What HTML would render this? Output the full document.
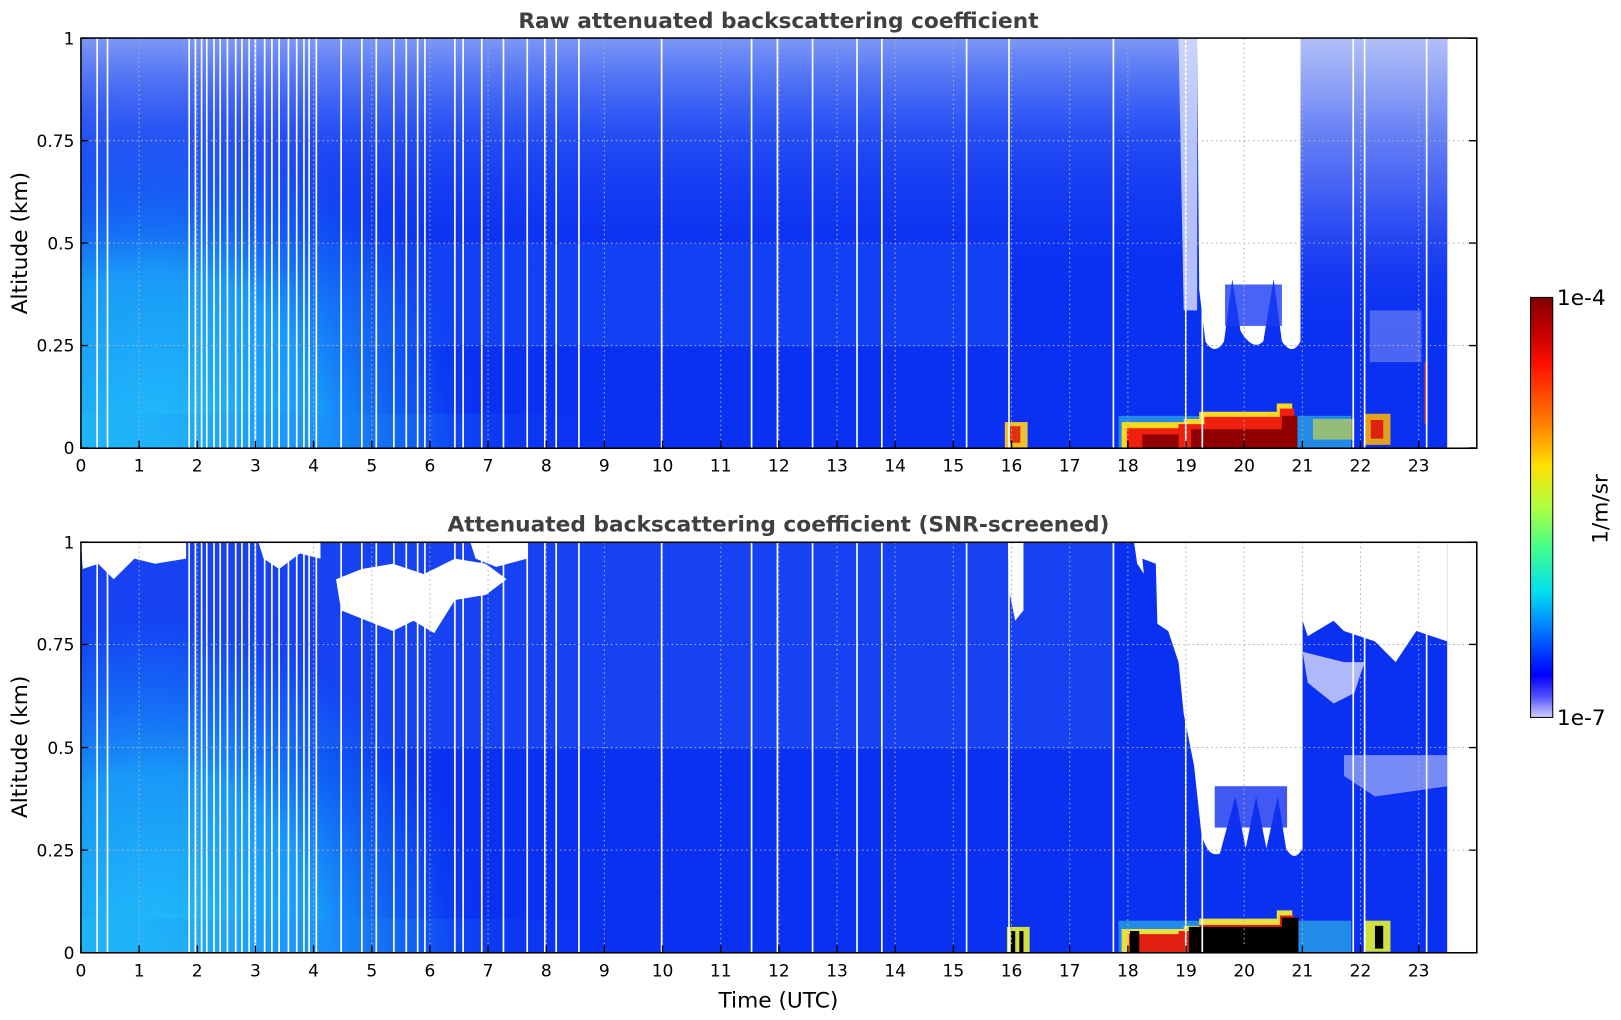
<!DOCTYPE html>
<html><head><meta charset="utf-8"><style>
html,body{margin:0;padding:0;background:#fff;overflow:hidden;}
svg{display:block;font-family:"DejaVu Sans","Liberation Sans",sans-serif;}
</style></head><body>
<svg width="1621" height="1020" viewBox="0 0 1568 986" preserveAspectRatio="none" xmlns="http://www.w3.org/2000/svg">
<defs>
<clipPath id="cp1"><rect x="78.3" y="36.8" width="1321.7" height="396.5"/></clipPath>
<clipPath id="cp2"><rect x="78.3" y="524.2" width="1321.7" height="396.8"/></clipPath>
<radialGradient id="cy1" gradientUnits="userSpaceOnUse" cx="150" cy="440" r="330" gradientTransform="translate(150 440) scale(1 1.1) translate(-150 -440)">
<stop offset="0" stop-color="#22c0fb" stop-opacity="1"/>
<stop offset="0.5" stop-color="#1aa4f8" stop-opacity="0.9"/>
<stop offset="0.8" stop-color="#1070f6" stop-opacity="0.45"/>
<stop offset="1" stop-color="#0a30f2" stop-opacity="0"/>
</radialGradient>
<radialGradient id="cy2" gradientUnits="userSpaceOnUse" cx="150" cy="928" r="330" gradientTransform="translate(150 928) scale(1 1.1) translate(-150 -928)">
<stop offset="0" stop-color="#22c0fb" stop-opacity="1"/>
<stop offset="0.5" stop-color="#1aa4f8" stop-opacity="0.9"/>
<stop offset="0.8" stop-color="#1070f6" stop-opacity="0.45"/>
<stop offset="1" stop-color="#0a30f2" stop-opacity="0"/>
</radialGradient>
<linearGradient id="noise" x1="0" y1="0" x2="0" y2="1">
<stop offset="0" stop-color="#8aa4f7" stop-opacity="0.9"/>
<stop offset="0.4" stop-color="#3e6af4" stop-opacity="0.5"/>
<stop offset="1" stop-color="#0a30f2" stop-opacity="0"/>
</linearGradient>
<linearGradient id="noiseR" x1="0" y1="0" x2="0" y2="1">
<stop offset="0" stop-color="#b8c4f8" stop-opacity="0.9"/>
<stop offset="0.5" stop-color="#6078f4" stop-opacity="0.6"/>
<stop offset="1" stop-color="#0a30f2" stop-opacity="0"/>
</linearGradient>
<linearGradient id="botstrip" x1="0" y1="0" x2="1" y2="0">
<stop offset="0" stop-color="#20b8fa" stop-opacity="0.6"/>
<stop offset="0.5" stop-color="#1a80f8" stop-opacity="0.4"/>
<stop offset="1" stop-color="#0a30f2" stop-opacity="0"/>
</linearGradient>
<linearGradient id="cb" x1="0" y1="0" x2="0" y2="1">
<stop offset="0" stop-color="#800000"/>
<stop offset="0.08" stop-color="#c00000"/>
<stop offset="0.16" stop-color="#ff1000"/>
<stop offset="0.3" stop-color="#ff8000"/>
<stop offset="0.4" stop-color="#ffe000"/>
<stop offset="0.5" stop-color="#b0ff40"/>
<stop offset="0.6" stop-color="#40ff90"/>
<stop offset="0.7" stop-color="#00e0f0"/>
<stop offset="0.8" stop-color="#0070ff"/>
<stop offset="0.9" stop-color="#0000ff"/>
<stop offset="0.95" stop-color="#5050ff"/>
<stop offset="1" stop-color="#d0d0ff"/>
</linearGradient>
<g id="vlines" stroke="#fff" stroke-width="1.6">
<line x1="94" x2="94" y1="0" y2="397"/><line x1="104" x2="104" y1="0" y2="397"/>
<line x1="183" x2="183" y1="0" y2="397"/><line x1="189" x2="189" y1="0" y2="397"/>
<line x1="195" x2="195" y1="0" y2="397"/><line x1="200" x2="200" y1="0" y2="397"/>
<line x1="207" x2="207" y1="0" y2="397"/><line x1="213" x2="213" y1="0" y2="397"/>
<line x1="220" x2="220" y1="0" y2="397"/><line x1="228" x2="228" y1="0" y2="397"/>
<line x1="234" x2="234" y1="0" y2="397"/><line x1="241" x2="241" y1="0" y2="397"/>
<line x1="247" x2="247" y1="0" y2="397"/><line x1="256" x2="256" y1="0" y2="397"/>
<line x1="263" x2="263" y1="0" y2="397"/><line x1="270" x2="270" y1="0" y2="397"/>
<line x1="279" x2="279" y1="0" y2="397"/><line x1="287" x2="287" y1="0" y2="397"/>
<line x1="294" x2="294" y1="0" y2="397"/><line x1="299" x2="299" y1="0" y2="397"/>
<line x1="306" x2="306" y1="0" y2="397"/><line x1="330" x2="330" y1="0" y2="397"/>
<line x1="350" x2="350" y1="0" y2="397"/><line x1="364" x2="364" y1="0" y2="397"/>
<line x1="381" x2="381" y1="0" y2="397"/><line x1="393" x2="393" y1="0" y2="397"/>
<line x1="404" x2="404" y1="0" y2="397"/><line x1="411" x2="411" y1="0" y2="397"/>
<line x1="440" x2="440" y1="0" y2="397"/><line x1="448" x2="448" y1="0" y2="397"/>
<line x1="466" x2="466" y1="0" y2="397"/><line x1="487" x2="487" y1="0" y2="397"/>
<line x1="510" x2="510" y1="0" y2="397"/><line x1="527" x2="527" y1="0" y2="397"/>
<line x1="538" x2="538" y1="0" y2="397"/><line x1="560" x2="560" y1="0" y2="397"/>
<line x1="640" x2="640" y1="0" y2="397"/><line x1="727" x2="727" y1="0" y2="397"/>
<line x1="752" x2="752" y1="0" y2="397"/><line x1="786" x2="786" y1="0" y2="397"/>
<line x1="829" x2="829" y1="0" y2="397"/><line x1="853" x2="853" y1="0" y2="397"/>
<line x1="935" x2="935" y1="0" y2="397"/><line x1="976" x2="976" y1="0" y2="397"/>
<line x1="1077" x2="1077" y1="0" y2="397"/><line x1="1147" x2="1147" y1="0" y2="397"/>
<line x1="1163" x2="1163" y1="0" y2="397"/><line x1="1309" x2="1309" y1="0" y2="397"/>
<line x1="1320" x2="1320" y1="0" y2="397"/><line x1="1380" x2="1380" y1="0" y2="397"/>
</g>
</defs>

<!-- ============ TOP PLOT ============ -->
<text x="753" y="27" text-anchor="middle" font-size="21" font-weight="bold" fill="#404040">Raw attenuated backscattering coefficient</text>
<g clip-path="url(#cp1)">
<rect x="78.3" y="36.8" width="1321.7" height="396.5" fill="#0a30f2"/>
<rect x="78.3" y="235" width="900" height="100" fill="#1a50f5" opacity="0.5"/>
<rect x="78.3" y="36.8" width="1321.7" height="396.5" fill="url(#cy1)"/>
<rect x="78.3" y="36.8" width="1321.7" height="240" fill="url(#noise)"/>
<rect x="1250" y="36.8" width="150" height="300" fill="url(#noiseR)"/>
<rect x="78.3" y="400" width="560" height="33" fill="url(#botstrip)"/>
<path d="M1158 36.8 H1258 V330 Q1250 345 1240 330 L1232 270 L1222 330 Q1212 340 1200 320 L1192 270 L1184 330 Q1175 345 1166 330 L1160 280 Z" fill="#fff"/>
<path d="M1140 36.8 H1158 V300 H1145 Z" fill="#dfe4fc" opacity="0.8"/>
<rect x="1185" y="275" width="55" height="40" fill="#1a3cf2" opacity="0.8"/>
<path d="M1325 300 h50 v50 h-50z" fill="#b0b8f5" opacity="0.4"/>
<rect x="1082" y="402" width="225" height="31" fill="#30c8e0" opacity="0.6"/>
<path d="M1085 433 V408 H1145 V405 H1160 V398 H1235 V390 H1250 V433 Z" fill="#f8d820"/>
<path d="M1090 433 V414 H1140 V410 H1165 V403 H1238 V395 H1252 V433 Z" fill="#f02010"/>
<path d="M1105 433 V420 H1140 V433 Z M1152 433 V415 H1240 V402 H1255 V433 Z" fill="#900000"/>
<rect x="1320" y="400" width="25" height="30" fill="#e0a020"/>
<rect x="1326" y="406" width="12" height="18" fill="#e02010"/>
<rect x="972" y="408" width="22" height="25" fill="#f0c030"/>
<rect x="977" y="412" width="10" height="16" fill="#e03010"/>
<rect x="1270" y="405" width="40" height="20" fill="#e0e030" opacity="0.6"/>
<rect x="1378" y="350" width="3" height="60" fill="#e03020"/>
<g transform="translate(0,36.8)"><use href="#vlines"/></g>
</g>
<g stroke="#b0b0b0" stroke-width="1" stroke-dasharray="1.5,3">
<path d="M134.6 37V433M190.8 37V433M247.1 37V433M303.3 37V433M359.6 37V433M415.9 37V433M472.1 37V433M528.4 37V433M584.6 37V433M640.9 37V433M697.2 37V433M753.4 37V433M809.7 37V433M865.9 37V433M922.2 37V433M978.5 37V433M1034.7 37V433M1091 37V433M1147.2 37V433M1203.5 37V433M1259.8 37V433M1316 37V433M1372.3 37V433"/>
<path d="M78 136H1428M78 235H1428M78 334H1428"/>
</g>
<rect x="78.3" y="36.8" width="1350.2" height="396.5" fill="none" stroke="#000" stroke-width="1.5"/>
<g stroke="#000" stroke-width="1.3">
<path d="M78 37h7M78 136h7M78 235h7M78 334h7M78 433h7M1428 37h-7M1428 136h-7M1428 235h-7M1428 334h-7M1428 433h-7"/>
<path d="M78.3 433v-7M134.6 433v-7M190.8 433v-7M247.1 433v-7M303.3 433v-7M359.6 433v-7M415.9 433v-7M472.1 433v-7M528.4 433v-7M584.6 433v-7M640.9 433v-7M697.2 433v-7M753.4 433v-7M809.7 433v-7M865.9 433v-7M922.2 433v-7M978.5 433v-7M1034.7 433v-7M1091 433v-7M1147.2 433v-7M1203.5 433v-7M1259.8 433v-7M1316 433v-7M1372.3 433v-7"/>
</g>
<g font-size="16.5" text-anchor="end" fill="#000">
<text x="72" y="43">1</text><text x="72" y="142">0.75</text><text x="72" y="241">0.5</text><text x="72" y="340">0.25</text><text x="72" y="439">0</text>
</g>
<g font-size="16.5" text-anchor="middle" fill="#000">
<text x="78.3" y="456">0</text><text x="134.6" y="456">1</text><text x="190.8" y="456">2</text><text x="247.1" y="456">3</text><text x="303.3" y="456">4</text><text x="359.6" y="456">5</text><text x="415.9" y="456">6</text><text x="472.1" y="456">7</text><text x="528.4" y="456">8</text><text x="584.6" y="456">9</text><text x="640.9" y="456">10</text><text x="697.2" y="456">11</text><text x="753.4" y="456">12</text><text x="809.7" y="456">13</text><text x="865.9" y="456">14</text><text x="922.2" y="456">15</text><text x="978.5" y="456">16</text><text x="1034.7" y="456">17</text><text x="1091" y="456">18</text><text x="1147.2" y="456">19</text><text x="1203.5" y="456">20</text><text x="1259.8" y="456">21</text><text x="1316" y="456">22</text><text x="1372.3" y="456">23</text>
</g>
<text transform="translate(26,235) rotate(-90)" text-anchor="middle" font-size="21" fill="#000">Altitude (km)</text>

<!-- ============ BOTTOM PLOT ============ -->
<text x="753" y="514" text-anchor="middle" font-size="21" font-weight="bold" fill="#404040">Attenuated backscattering coefficient (SNR-screened)</text>
<g clip-path="url(#cp2)">
<rect x="78.3" y="524.2" width="1321.7" height="396.8" fill="#0a30f2"/>
<rect x="78.3" y="524.2" width="1000" height="200" fill="#2a60f5" opacity="0.4"/>
<rect x="78.3" y="524.2" width="1321.7" height="396.8" fill="url(#cy2)"/>
<rect x="78.3" y="888" width="560" height="33" fill="url(#botstrip)"/>
<path d="M78.3 524.2 H180 V540 L150 545 L130 540 L110 560 L95 545 L80 550 Z" fill="#fff"/>
<path d="M250 524.2 H310 V540 L290 535 L270 550 L255 540 Z" fill="#fff"/>
<path d="M325 560 L350 550 L380 545 L410 555 L440 540 L470 545 L490 560 L470 575 L440 580 L420 612 L400 600 L380 610 L355 600 L330 590 Z" fill="#fff"/>
<path d="M455 524.2 H510 V540 L480 548 L460 540 Z" fill="#fff"/>
<path d="M975 524.2 H990 V590 L982 600 L976 570 Z" fill="#fff"/>
<path d="M1097 524.2 H1400 V620 L1370 610 L1350 640 L1330 620 L1300 610 L1290 600 L1265 615 L1260 600 L1260 820 Q1252 835 1244 820 L1236 770 L1225 820 L1215 770 L1205 820 L1195 770 L1180 825 Q1168 830 1162 805 L1155 740 L1145 690 L1140 640 L1130 610 L1115 600 L1110 560 L1100 545 Z" fill="#fff"/>
<path d="M1105 540 L1118 545 L1120 620 L1112 610 Z" fill="#0a30f2"/>
<path d="M1260 630 L1300 640 L1320 640 L1310 670 L1290 680 L1265 660 Z" fill="#d8dcfb" opacity="0.8"/>
<path d="M1300 730 L1400 730 L1400 760 L1330 770 L1300 750 Z" fill="#c0c8f8" opacity="0.6"/>
<rect x="1175" y="760" width="70" height="40" fill="#1030f0" opacity="0.8"/>
<rect x="1082" y="890" width="225" height="31" fill="#30c8e0" opacity="0.6"/>
<path d="M1085 921 V898 H1145 V895 H1160 V888 H1235 V880 H1250 V921 Z" fill="#e8e040"/>
<path d="M1092 921 V903 H1140 V900 H1160 V894 H1238 V885 H1252 V921 Z" fill="#e02010"/>
<path d="M1093 921 V900 H1102 V921 Z M1150 921 V896 H1240 V887 H1256 V921 Z" fill="#000"/>
<rect x="1320" y="890" width="25" height="30" fill="#d0e040"/>
<rect x="1330" y="895" width="8" height="22" fill="#000"/>
<rect x="974" y="896" width="22" height="25" fill="#d0e040"/>
<rect x="978" y="900" width="4" height="21" fill="#000"/><rect x="986" y="900" width="4" height="21" fill="#000"/>
<rect x="1379" y="840" width="1.5" height="55" fill="#000"/>
<g transform="translate(0,524.2)"><use href="#vlines"/></g>
</g>
<g stroke="#b0b0b0" stroke-width="1" stroke-dasharray="1.5,3">
<path d="M134.6 524V921M190.8 524V921M247.1 524V921M303.3 524V921M359.6 524V921M415.9 524V921M472.1 524V921M528.4 524V921M584.6 524V921M640.9 524V921M697.2 524V921M753.4 524V921M809.7 524V921M865.9 524V921M922.2 524V921M978.5 524V921M1034.7 524V921M1091 524V921M1147.2 524V921M1203.5 524V921M1259.8 524V921M1316 524V921M1372.3 524V921"/>
<path d="M78 623H1428M78 722.6H1428M78 821.8H1428"/>
</g>
<rect x="78.3" y="524.2" width="1350.2" height="396.8" fill="none" stroke="#000" stroke-width="1.5"/>
<g stroke="#000" stroke-width="1.3">
<path d="M78 524h7M78 623h7M78 722.6h7M78 821.8h7M78 921h7M1428 524h-7M1428 623h-7M1428 722.6h-7M1428 821.8h-7M1428 921h-7"/>
<path d="M78.3 921v-7M134.6 921v-7M190.8 921v-7M247.1 921v-7M303.3 921v-7M359.6 921v-7M415.9 921v-7M472.1 921v-7M528.4 921v-7M584.6 921v-7M640.9 921v-7M697.2 921v-7M753.4 921v-7M809.7 921v-7M865.9 921v-7M922.2 921v-7M978.5 921v-7M1034.7 921v-7M1091 921v-7M1147.2 921v-7M1203.5 921v-7M1259.8 921v-7M1316 921v-7M1372.3 921v-7"/>
</g>
<g font-size="16.5" text-anchor="end" fill="#000">
<text x="72" y="530">1</text><text x="72" y="629">0.75</text><text x="72" y="729">0.5</text><text x="72" y="828">0.25</text><text x="72" y="927">0</text>
</g>
<g font-size="16.5" text-anchor="middle" fill="#000">
<text x="78.3" y="944">0</text><text x="134.6" y="944">1</text><text x="190.8" y="944">2</text><text x="247.1" y="944">3</text><text x="303.3" y="944">4</text><text x="359.6" y="944">5</text><text x="415.9" y="944">6</text><text x="472.1" y="944">7</text><text x="528.4" y="944">8</text><text x="584.6" y="944">9</text><text x="640.9" y="944">10</text><text x="697.2" y="944">11</text><text x="753.4" y="944">12</text><text x="809.7" y="944">13</text><text x="865.9" y="944">14</text><text x="922.2" y="944">15</text><text x="978.5" y="944">16</text><text x="1034.7" y="944">17</text><text x="1091" y="944">18</text><text x="1147.2" y="944">19</text><text x="1203.5" y="944">20</text><text x="1259.8" y="944">21</text><text x="1316" y="944">22</text><text x="1372.3" y="944">23</text>
</g>
<text transform="translate(26,722) rotate(-90)" text-anchor="middle" font-size="21" fill="#000">Altitude (km)</text>
<text x="753" y="974" text-anchor="middle" font-size="21" fill="#000">Time (UTC)</text>

<!-- ============ COLORBAR ============ -->
<rect x="1480.5" y="287.5" width="21.5" height="406" fill="url(#cb)" stroke="#000" stroke-width="1"/>
<text x="1506" y="295" font-size="21" fill="#000">1e-4</text>
<text x="1506" y="701" font-size="21" fill="#000">1e-7</text>
<text transform="translate(1555,492) rotate(-90)" text-anchor="middle" font-size="21" fill="#000">1/m/sr</text>
</svg>
</body></html>
